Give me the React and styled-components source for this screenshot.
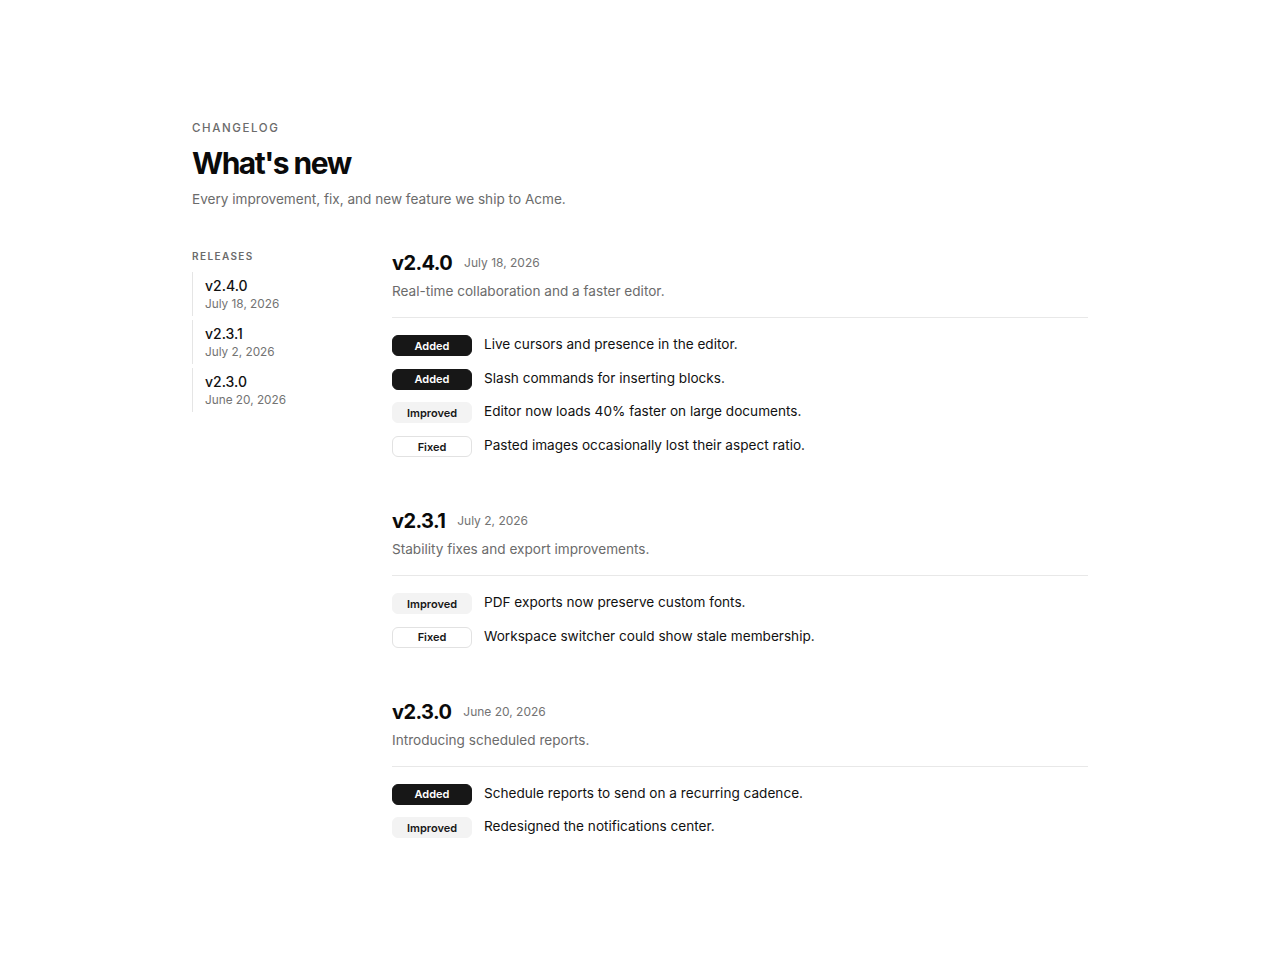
import React from 'react';
import styled, { createGlobalStyle } from 'styled-components';

const releases = [
  {
    version: 'v2.4.0',
    date: 'July 18, 2026',
    summary: 'Real-time collaboration and a faster editor.',
    changes: [
      { kind: 'Added', text: 'Live cursors and presence in the editor.' },
      { kind: 'Added', text: 'Slash commands for inserting blocks.' },
      { kind: 'Improved', text: 'Editor now loads 40% faster on large documents.' },
      { kind: 'Fixed', text: 'Pasted images occasionally lost their aspect ratio.' },
    ],
  },
  {
    version: 'v2.3.1',
    date: 'July 2, 2026',
    summary: 'Stability fixes and export improvements.',
    changes: [
      { kind: 'Improved', text: 'PDF exports now preserve custom fonts.' },
      { kind: 'Fixed', text: 'Workspace switcher could show stale membership.' },
    ],
  },
  {
    version: 'v2.3.0',
    date: 'June 20, 2026',
    summary: 'Introducing scheduled reports.',
    changes: [
      { kind: 'Added', text: 'Schedule reports to send on a recurring cadence.' },
      { kind: 'Improved', text: 'Redesigned the notifications center.' },
    ],
  },
];

const App = () => {
  return (
    <>
      <GlobalStyle />
      <Page>
        <Header>
          <Eyebrow>Changelog</Eyebrow>
          <Title>What's new</Title>
          <Subtitle>Every improvement, fix, and new feature we ship to Acme.</Subtitle>
        </Header>

        <Layout>
          <Sidebar>
            <SideLabel>Releases</SideLabel>
            <ReleaseNav>
              {releases.map((r) => (
                <NavItem key={r.version}>
                  <NavVersion>{r.version}</NavVersion>
                  <NavDate>{r.date}</NavDate>
                </NavItem>
              ))}
            </ReleaseNav>
          </Sidebar>

          <Main>
            {releases.map((r) => (
              <Release key={r.version}>
                <ReleaseHead>
                  <HeadLine>
                    <Version>{r.version}</Version>
                    <ReleaseDate>{r.date}</ReleaseDate>
                  </HeadLine>
                  <Summary>{r.summary}</Summary>
                </ReleaseHead>
                <Changes>
                  {r.changes.map((c, i) => (
                    <Change key={i}>
                      <Badge kind={c.kind}>{c.kind}</Badge>
                      <ChangeText>{c.text}</ChangeText>
                    </Change>
                  ))}
                </Changes>
              </Release>
            ))}
          </Main>
        </Layout>
      </Page>
    </>
  );
};

export default App;

const GlobalStyle = createGlobalStyle`
  * { box-sizing: border-box; }
  body {
    margin: 0;
    background: #ffffff;
    color: #111111;
    font-family: Inter, "Noto Sans", "Liberation Sans", sans-serif;
    -webkit-font-smoothing: antialiased;
  }
`;

const Page = styled.div`
  width: 896px;
  margin: 0 auto;
  padding: 120px 0 80px;
`;

const Header = styled.header`
  display: flex;
  flex-direction: column;
`;

const Eyebrow = styled.div`
  font-size: 11.5px;
  line-height: 16px;
  font-weight: 500;
  letter-spacing: 0.14em;
  text-transform: uppercase;
  color: #6b6b6b;
`;

const Title = styled.h1`
  margin: 8px 0 0;
  font-size: 30px;
  line-height: 38px;
  font-weight: 700;
  letter-spacing: -0.05em;
  color: #0a0a0a;
`;

const Subtitle = styled.p`
  margin: 7px 0 0;
  font-size: 13.6px;
  line-height: 20px;
  color: #6b6b6b;
`;

const Layout = styled.div`
  display: flex;
  margin-top: 40px;
`;

const Sidebar = styled.aside`
  width: 200px;
  flex-shrink: 0;
`;

const SideLabel = styled.div`
  font-size: 10px;
  line-height: 14px;
  font-weight: 600;
  letter-spacing: 0.14em;
  text-transform: uppercase;
  color: #6b6b6b;
`;

const ReleaseNav = styled.nav`
  display: flex;
  flex-direction: column;
  gap: 4px;
  margin-top: 9px;
`;

const NavItem = styled.div`
  display: flex;
  flex-direction: column;
  padding: 4px 0 4px 12px;
  border-left: 1px solid #e5e5e5;
`;

const NavVersion = styled.span`
  font-size: 14px;
  line-height: 20px;
  font-weight: 500;
  color: #111111;
`;

const NavDate = styled.span`
  font-size: 11.8px;
  line-height: 16px;
  color: #737373;
`;

const Main = styled.main`
  flex: 1;
  display: flex;
  flex-direction: column;
  gap: 51px;
`;

const Release = styled.section`
  display: flex;
  flex-direction: column;
`;

const ReleaseHead = styled.div`
  padding-bottom: 16px;
  border-bottom: 1px solid #e8e8e8;
`;

const HeadLine = styled.div`
  display: flex;
  align-items: center;
  gap: 12px;
`;

const Version = styled.h2`
  margin: 0;
  font-size: 20px;
  line-height: 28px;
  font-weight: 700;
  letter-spacing: -0.03em;
  color: #0a0a0a;
`;

const ReleaseDate = styled.span`
  font-size: 12px;
  line-height: 16px;
  color: #737373;
`;

const Summary = styled.p`
  margin: 4px 0 0;
  font-size: 13.6px;
  line-height: 20px;
  color: #6b6b6b;
`;

const Changes = styled.ul`
  list-style: none;
  margin: 0;
  padding: 15px 0 0;
  display: flex;
  flex-direction: column;
  gap: 11.7px;
`;

const Change = styled.li`
  display: flex;
  align-items: flex-start;
  gap: 12px;
`;

const badgeColors = {
  Added: { bg: '#171717', fg: '#ffffff', border: '#171717' },
  Improved: { bg: '#f3f3f3', fg: '#171717', border: '#f3f3f3' },
  Fixed: { bg: '#ffffff', fg: '#171717', border: '#e2e2e2' },
};

const Badge = styled.span`
  flex-shrink: 0;
  width: 80px;
  height: 21px;
  margin: 2px 0 -1px;
  display: flex;
  align-items: center;
  justify-content: center;
  border-radius: 6px;
  font-size: 11px;
  font-weight: 600;
  background: ${(p) => badgeColors[p.kind].bg};
  color: ${(p) => badgeColors[p.kind].fg};
  border: 1px solid ${(p) => badgeColors[p.kind].border};
`;

const ChangeText = styled.span`
  font-size: 13.6px;
  line-height: 22px;
  color: #111111;
`;
